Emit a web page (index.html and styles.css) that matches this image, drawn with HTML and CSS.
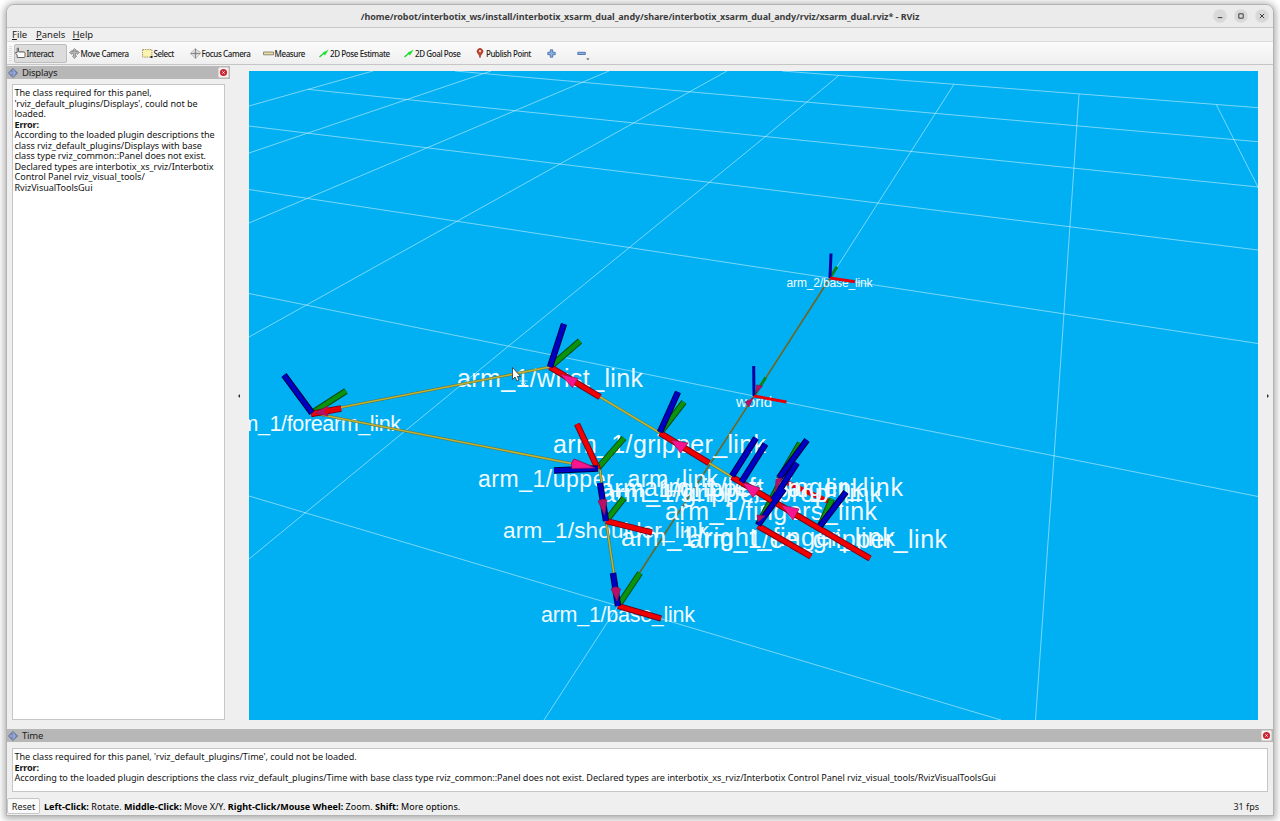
FILE: index.html
```
<!DOCTYPE html>
<html lang="en">
<head>
<meta charset="utf-8">
<title>RViz</title>
<link rel="stylesheet" href="styles.css">
</head>
<body>
<div class="window">
  <header class="titlebar">
    <span class="title">/home/robot/interbotix_ws/install/interbotix_xsarm_dual_andy/share/interbotix_xsarm_dual_andy/rviz/xsarm_dual.rviz* - RViz</span>
    <div class="controls">
      <svg class="ctl" viewBox="0 0 14 14"><circle cx="7" cy="7" r="6.8"/><path d="M4.8 8.6h4.6"/></svg>
      <svg class="ctl" viewBox="0 0 14 14"><circle cx="7" cy="7" r="6.8"/><path d="M4.8 4.8h4.4v4.4h-4.4z"/></svg>
      <svg class="ctl" viewBox="0 0 14 14"><circle cx="7" cy="7" r="6.8"/><path d="M4.8 4.8l4.4 4.4M9.2 4.8l-4.4 4.4"/></svg>
    </div>
  </header>
  <nav class="menubar"><span class="m-file"><u>F</u>ile</span><span class="m-panels"><u>P</u>anels</span><span><u>H</u>elp</span></nav>
  <div class="toolbar">
    <span class="grip"></span>
    <span class="tool active"><svg width="11" height="12" viewBox="0 0 11 12"><path d="M2.2 10.5V8L.7 6.4v-1l1.5.3V1.2h1.3v3.6h5.2q1.3 0 1.3 1.5v3.2q0 1-1 1z" fill="#fff" stroke="#555" stroke-width=".9"/><path d="M5 4.8v1M7 4.8v1M8.8 5v1" stroke="#777" stroke-width=".6"/></svg>Interact</span>
    <span class="tool t-move"><svg width="11" height="11" viewBox="0 0 11 11"><path d="M5.5.5l2 2h-1.2v1h2V2.700L10.500 4.500 8.300 6.300V5.300H6.600v2.700h1L5.500 10.500 3.500 8h1V5.300H2.700v1L.5 4.500l2.200-1.800v.8h2v-1H3.500z" fill="#bbb" stroke="#777" stroke-width=".7"/></svg>Move Camera</span>
    <span class="tool t-select"><svg width="11" height="9" viewBox="0 0 11 9"><path d="M.6.6h9.300v7.500H.6z" fill="#fbf3b0" stroke="#8a8446" stroke-width=".8" stroke-dasharray="1.500 .8"/><path d="M8.500 7h2v2h-2z" fill="#222"/></svg>Select</span>
    <span class="tool t-focus"><svg width="11" height="11" viewBox="0 0 11 11"><path d="M5.500.3l1.700 2.200 2.300.9L10.800 5.500 8.600 7.300 7.300 8.600 5.500 10.800 3.700 8.600 2.300 7.300.2 5.500 2.300 3.500z" fill="#ddd" stroke="#999" stroke-width=".6"/><path d="M5.500 1v3M5.500 7v3M1 5.500h3M7 5.500h3" stroke="#888" stroke-width="1"/><circle cx="5.500" cy="5.500" r="1.300" fill="#777"/></svg>Focus Camera</span>
    <span class="tool t-measure"><svg width="11" height="5" viewBox="0 0 11 5"><path d="M.5 1h10v2.800H.5z" fill="#eadca5" stroke="#77735f" stroke-width=".8"/></svg>Measure</span>
    <span class="tool t-est"><svg width="10" height="9" viewBox="0 0 10 9"><path d="M.5 8L4 5M4 5l2-2" stroke="#1fd62f" stroke-width="1.500"/><path d="M3.500 4l2.500 2.400L9.700.5z" fill="#20e030"/></svg>2D Pose Estimate</span>
    <span class="tool t-goal"><svg width="10" height="9" viewBox="0 0 10 9"><path d="M.5 8L4 5M4 5l2-2" stroke="#1fd62f" stroke-width="1.500"/><path d="M3.500 4l2.500 2.400L9.700.5z" fill="#20e030"/></svg>2D Goal Pose</span>
    <span class="tool t-pub"><svg width="8" height="10" viewBox="0 0 8 10"><path d="M4 9.800Q3.500 7 1.800 5.300A2.900 2.900 0 1 1 6.200 5.300Q4.500 7 4 9.800z" fill="#c8432b" stroke="#8c2a1a" stroke-width=".6"/><circle cx="4" cy="3.200" r="1.100" fill="#f7dcd4"/></svg>Publish Point</span>
    <svg class="plus" width="9" height="9" viewBox="0 0 9 9"><path d="M3.300.8h2.400v2.500h2.500v2.400H5.700v2.500H3.300V5.700H.8V3.300h2.500z" fill="#8fb0dc" stroke="#4773b3" stroke-width=".9"/></svg>
    <svg class="minus" width="13" height="13" viewBox="0 0 13 13"><path d="M.8 5.300h7.500v2.200H.8z" fill="#8fb0dc" stroke="#4773b3" stroke-width=".9"/><path d="M9.300 11.500h3.200l-1.600 1.500z" fill="#333"/></svg>
  </div>
  <main class="middle">
    <section class="dock">
      <div class="dock-title"><svg class="gem" viewBox="0 0 10 10"><path d="M5 .5L9.500 5 5 9.500.5 5z" fill="#7d90c2" stroke="#4c5c8c" stroke-width=".8"/><path d="M5 .8L7 5 5 9.200M.8 5H7" fill="none" stroke="#bfcae8" stroke-width=".5"/></svg>Displays<span class="close"><svg viewBox="0 0 10 10"><circle cx="5" cy="5" r="4" fill="#cc2632"/><path d="M3.800 3.800l2.400 2.400M6.200 3.800L3.800 6.200" stroke="#fff"/></svg></span></div>
      <div class="text displays">The class required for this panel,<br>'rviz_default_plugins/Displays', could not be<br>loaded.<br><b>Error:</b><br>According to the loaded plugin descriptions the<br>class rviz_default_plugins/Displays with base<br>class type rviz_common::Panel does not exist.<br>Declared types are interbotix_xs_rviz/Interbotix<br>Control Panel rviz_visual_tools/<br>RvizVisualToolsGui</div>
    </section>
    <div class="split left"><i></i></div>
    <svg class="scene" viewBox="249 71 1009 649">
      <g class="grid">
        <path d="M782 71L1258 107.700M455 71L760 98L1258 141.700M307.700 89.300L760 136L1258 187M249 126L760 188.500L1258 250M249 189.500L760 267.500L1258 343.500M249 293.500L754 396L1258 496.500M249 496L1001 720"/>
        <path d="M249 106L373 71M249 153L491 71M249 223L609 71M249 337L727 71M249 559L509 345.700L760 141L839 75.300M954 84.300L830 278L754 395L618 606L544 720M1079 94L1058 400L1035.500 720M1216.300 104.700L1258.500 188"/>
      </g>
      <g class="brown"><path d="M830 278L754 396L618 606"/></g>
      <path d="M779 479L832 503" stroke="#e4000c" stroke-width="5"/>
      <g class="labels">
        <text x="457" y="386.500" font-size="25" textLength="186">arm_1/wrist_link</text>
        <text x="222" y="430.500" font-size="21.500" textLength="179">arm_1/forearm_link</text>
        <text x="478" y="486.500" font-size="23" textLength="240">arm_1/upper_arm_link</text>
        <text x="553" y="452.500" font-size="25" textLength="213">arm_1/gripper_link</text>
        <text x="503" y="538" font-size="22.500" textLength="206">arm_1/shoulder_link</text>
        <text x="541" y="622" font-size="21.500" textLength="154">arm_1/base_link</text>
        <text x="736" y="406.700" font-size="15" textLength="36">world</text>
        <text x="786.500" y="287" font-size="12" textLength="86">arm_2/base_link</text>
        <text x="665" y="519.500" font-size="25" textLength="212">arm_1/fingers_link</text>
        <text x="621" y="546" font-size="25.500" textLength="274">arm_1/right_finger_link</text>
        <text x="689" y="547.500" font-size="25" textLength="258">arm_1/ee_gripper_link</text>
        <text x="644" y="495.500" font-size="25" textLength="259">arm_1/left_finger_link</text>
        <text x="600" y="497" font-size="25" textLength="264">arm_1/gripper_bar_link</text>
        <text x="602" y="501.500" font-size="25" textLength="280">arm_1/gripper_prop_link</text>
      </g>
      <g class="yellow"><path class="rim" d="M550 367L312 413L600 469M600 469L606 521L614 574M600 397L660 433L732 477"/><path d="M550 367L312 413L600 469M600 469L606 521L614 574M600 397L660 433L732 477"/></g>
      <defs>
        <path id="greens" d="M550 367L580 341M660 433L684 402M312 413L346 391M598 468L624 438M606 521L624 498M618 606L640 573M779 479L800 443M820 526L832 499M758 525L779 485"/>
        <path id="reds" d="M550 367L600 397M660 433L709 463M311 414L341 408.500M598 469L577 424M606 521L652 532.500M618 606L661 618.500M732 477L870 558.500M758 526L811 556.500"/>
        <path id="blues" d="M550 367L564 324M660 432L678 392M312 413L284 375M598 468.500L554 470.500M606 521L600 483M618 606L613 573M732 476L756 438M741.500 482L765.500 444M779 478L807 440M773 500L797 463M820 526L846 492M758 525L784 489"/>
        <path id="farblue" d="M754 396L753.700 366M830 278L831 253.500"/>
      </defs>
      <g class="axis"><use href="#greens" stroke="#004d14"/><use class="core" href="#greens" stroke="#0a930c"/></g>
      <g class="axis"><use href="#reds" stroke="#780018"/><use class="core" href="#reds" stroke="#f00000"/></g>
      <g class="cones">
        <path d="M560 374L578 378.500L572.500 387.500z"/><path d="M671 440L688 443L680.500 453z"/><path d="M597 468L574 459Q570 463 572 468.500z"/><path d="M742 482L760 488L753 497.500z"/><path d="M781 505L799 509L793 520z"/>
      </g>
      <g class="axis"><use href="#blues" stroke="#000043"/><use class="core" href="#blues" stroke="#0000c4"/></g>
      <g class="cones"><path d="M595 468L574 459Q570 463 572 468.500z"/></g>
      <g class="cones dark"><path d="M604.500 515L598 501Q602 498 607 500z"/><path d="M617 601L611 589Q616 585 620.500 589z"/><path d="M315 413L328 406V416z"/><path d="M775 492L776 479L782 478z"/><path d="M758 522L757 515L765 516z"/></g>
      <path d="M325 411.500L341 408.500" stroke="#e50008" stroke-width="4.500"/>
      <g fill="none" stroke-width="3"><path d="M754 396L765.700 377.500M830 278L837 266.700" stroke="#078216"/><use href="#farblue" stroke="#0000a0"/><path d="M754 396L786.500 402M830 278L855 281.700" stroke="#e4000c"/></g>
      <g class="cones dark"><path d="M756 393L756.500 385L762.500 386z"/><path d="M753 398L745 402L749 407z"/></g>
      <g fill="#fff" stroke="#333" stroke-width=".8"><path d="M512.500 367.500V379.500L515 377L517 381L519 380L517.300 376.500H520.500z"/><path d="M523.500 377v8M519.500 381h8M521 383l2.500 2.500 2.500-2.500" fill="none" stroke="#e8f4fa"/></g>
    </svg>
    <div class="split right"><i></i></div>
  </main>
  <section class="time">
    <div class="dock-title"><svg class="gem" viewBox="0 0 10 10"><path d="M5 .5L9.500 5 5 9.500.5 5z" fill="#7d90c2" stroke="#4c5c8c" stroke-width=".8"/><path d="M5 .8L7 5 5 9.200M.8 5H7" fill="none" stroke="#bfcae8" stroke-width=".5"/></svg>Time<span class="close"><svg viewBox="0 0 10 10"><circle cx="5" cy="5" r="4" fill="#cc2632"/><path d="M3.800 3.800l2.400 2.400M6.200 3.800L3.800 6.200" stroke="#fff"/></svg></span></div>
    <div class="text message">The class required for this panel, 'rviz_default_plugins/Time', could not be loaded.<br><b>Error:</b><br>According to the loaded plugin descriptions the class rviz_default_plugins/Time with base class type rviz_common::Panel does not exist. Declared types are interbotix_xs_rviz/Interbotix Control Panel rviz_visual_tools/RvizVisualToolsGui</div>
  </section>
  <footer class="status"><span class="reset">Reset</span><span class="hint"><b>Left-Click:</b> Rotate. <b>Middle-Click:</b> Move X/Y. <b>Right-Click/Mouse Wheel:</b> Zoom. <b>Shift:</b> More options.</span><span class="fps">31 fps</span></footer>
</div>
</body>
</html>
```
FILE: styles.css
```
* { box-sizing: border-box; }
body { margin: 0; height: 821px; padding: 4px 6px 6px; background: #fff; overflow: hidden; font-family: "Noto Sans", sans-serif; color: #1c1c1c; }
svg { display: block; flex: none; }
.window { width: 1268px; height: 812px; display: flex; flex-direction: column; background: #efefef; border: 1px solid #b3b3b3; border-radius: 8px 8px 0 0; box-shadow: 0 1px 7px 2px rgba(0,0,0,.32); overflow: hidden; white-space: nowrap; }
.titlebar { height: 23px; flex: none; display: grid; grid-template-columns: 60px 1fr 60px; align-items: center; background: #ebebeb; border-bottom: 1px solid #c8c8c8; }
.title { grid-column: 2; text-align: center; font-size: 9px; font-weight: 700; letter-spacing: -.065px; color: #3d3d3d; }
.controls { display: flex; gap: 7px; }
.ctl { width: 14px; height: 14px; fill: #d9d9d9; }
.ctl path { fill: none; stroke: #3d3d3d; stroke-width: 1; }
.menubar { height: 14px; flex: none; display: flex; align-items: center; padding-left: 5px; font-size: 9.500px; line-height: 13px; border-bottom: 1px solid #dcdcdc; }
.menubar u { text-underline-offset: 1px; text-decoration-thickness: 1px; }
.m-file { width: 24px; }
.m-panels { width: 36.500px; }
.toolbar { height: 23px; flex: none; display: flex; align-items: center; background: linear-gradient(#fbfbfb, #efefef); border-bottom: 1px solid #c5c5c5; font-size: 8px; font-weight: 500; letter-spacing: -.4px; }
.grip { width: 3px; height: 15px; margin: 0 2px; background: repeating-linear-gradient(#ddd 0 1px, #f8f8f8 1px 2px); }
.tool { display: flex; align-items: center; height: 19px; gap: .5px; }
.active { width: 53px; background: #dcdcdc; border: 1px solid #bdbdbd; border-radius: 2px; }
.t-move { width: 75px; padding-left: 2px; }
.t-select { width: 48px; }
.t-focus { width: 73px; }
.t-measure { width: 56px; }
.t-est { width: 85px; gap: 1px; }
.t-goal { width: 72px; gap: 1px; }
.t-pub { width: 70px; gap: 2px; }
.plus { margin-left: 1px; }
.minus { margin-left: 21px; }
.middle { flex: none; height: 664px; display: flex; padding-top: 1px; }
.dock { width: 223px; }
.dock-title { height: 13px; display: flex; align-items: center; gap: 4px; padding-left: 1px; background: #b7b7b7; font-size: 9.500px; letter-spacing: -.2px; }
.gem { width: 10px; height: 10px; }
.close { width: 11px; height: 11px; margin-left: auto; margin-right: 1px; background: #f6f6f6; border: 1px solid #e2d3d3; border-radius: 2px; }
.close svg { width: 9px; height: 9px; }
.text { background: #fff; border: 1px solid #c6c6c6; color: #141414; font-size: 9.100px; line-height: 10.520px; letter-spacing: -.05px; padding: 3px 1.500px; overflow: hidden; }
.text b { letter-spacing: -.15px; }
.displays { margin: 5px 0 0 5px; width: 213px; height: 636px; }
.split { display: flex; align-items: center; justify-content: center; padding-bottom: 4px; }
.split i { border: 2px solid transparent; }
.left { width: 19px; }
.left i { border-right-color: #333; margin-right: 3px; }
.right { flex: 1; }
.right i { border-left-color: #333; margin-left: 7px; }
.scene { width: 1009px; height: 649px; margin-top: 5px; background: #00b0f3; overflow: hidden; }
.grid { fill: none; stroke: #c9f0ff; stroke-opacity: .6; stroke-width: 1; }
.brown { fill: none; stroke: #64682d; stroke-width: 1.700; }
.yellow { fill: none; stroke: #c2b432; stroke-width: 1.500; }
.yellow .rim { stroke: #5d7045; stroke-width: 2.600; }
.labels { font-family: "Liberation Sans", sans-serif; fill: #f0faff; }
.axis { fill: none; stroke-width: 6.400; }
.core { stroke-width: 4.400; }
.cones { fill: #fa1590; stroke: #8a1552; stroke-width: .7; }
.dark { fill: #b70f65; }
.time { flex: none; height: 64px; }
.message { margin: 6px 5px 0; height: 44px; }
.status { flex: 1; display: flex; align-items: center; padding: 5px 14px 1px 0; font-size: 9px; }
.reset { width: 33px; height: 16px; display: flex; align-items: center; justify-content: center; background: #fafafa; border: 1px solid #c6c6c6; border-radius: 2px; }
.hint { margin-left: 4px; letter-spacing: .03px; color: #000; }
.fps { margin-left: auto; }
```
